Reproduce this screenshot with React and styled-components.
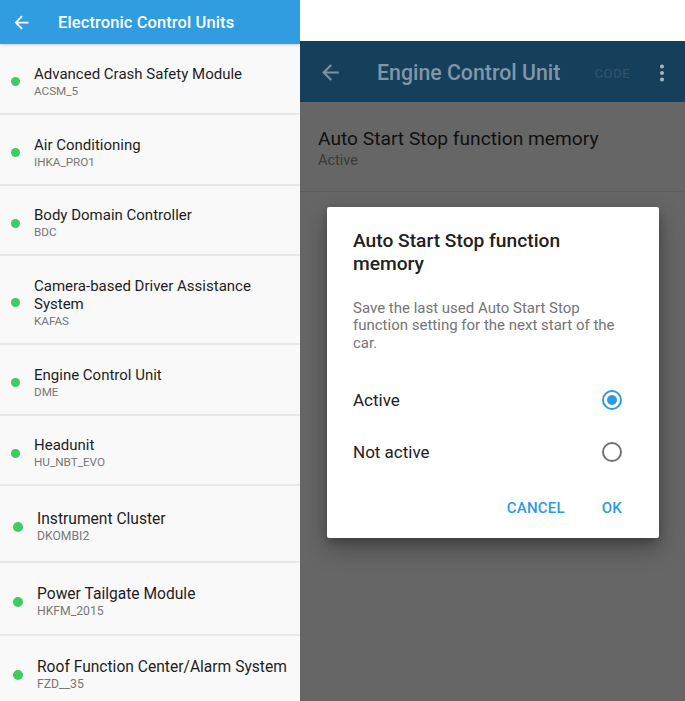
import React from 'react'
import styled, { createGlobalStyle } from 'styled-components'

const GlobalStyle = createGlobalStyle`
    html, body {
        margin: 0;
        padding: 0;
        background: #fff;
    }
    body {
        font-family: Roboto, "Noto Sans", "Liberation Sans", sans-serif;
        -webkit-font-smoothing: antialiased;
    }
`

const units = [
    { name: 'Advanced Crash Safety Module', code: 'ACSM_5', h: 71 },
    { name: 'Air Conditioning', code: 'IHKA_PRO1', h: 71 },
    { name: 'Body Domain Controller', code: 'BDC', h: 70 },
    { name: 'Camera-based Driver Assistance System', code: 'KAFAS', h: 89 },
    { name: 'Engine Control Unit', code: 'DME', h: 71 },
    { name: 'Headunit', code: 'HU_NBT_EVO', h: 70 },
    { name: 'Instrument Cluster', code: 'DKOMBI2', h: 77, big: true },
    { name: 'Power Tailgate Module', code: 'HKFM_2015', h: 73, big: true },
    { name: 'Roof Function Center/Alarm System', code: 'FZD__35', h: 74, big: true },
]

const BackArrow = ({ size = 24, color = '#fff' }) => (
    <svg width={size} height={size} viewBox="0 0 24 24">
        <path fill={color} d="M20 11H7.83l5.59-5.59L12 4l-8 8 8 8 1.41-1.41L7.83 13H20v-2z" />
    </svg>
)

const Kebab = ({ color }) => (
    <svg width="6" height="18" viewBox="0 0 6 18">
        <circle cx="3" cy="2.5" r="2" fill={color} />
        <circle cx="3" cy="9" r="2" fill={color} />
        <circle cx="3" cy="15.5" r="2" fill={color} />
    </svg>
)

const App = () => {
    return (
        <>
            <GlobalStyle />
            <Page>
                <ListScreen>
                    <Header>
                        <IconSlot>
                            <BackArrow size={21} />
                        </IconSlot>
                        <HeaderTitle>Electronic Control Units</HeaderTitle>
                    </Header>
                    <List>
                        {units.map((u) => (
                            <Row key={u.code} $h={u.h} $big={u.big}>
                                <Dot $big={u.big} />
                                <RowText>
                                    <RowTitle $big={u.big}>{u.name}</RowTitle>
                                    <RowCode $big={u.big}>{u.code}</RowCode>
                                </RowText>
                            </Row>
                        ))}
                    </List>
                </ListScreen>

                <RightPane>
                    <TopGap />
                    <DetailScreen>
                        <Toolbar>
                            <ToolbarBack>
                                <BackArrow size={25} color="#7c93a4" />
                            </ToolbarBack>
                            <ToolbarTitle>Engine Control Unit</ToolbarTitle>
                            <ToolbarAction>CODE</ToolbarAction>
                            <KebabSlot>
                                <Kebab color="#a9b6c0" />
                            </KebabSlot>
                        </Toolbar>
                        <SettingRow>
                            <SettingTitle>Auto Start Stop function memory</SettingTitle>
                            <SettingValue>Active</SettingValue>
                        </SettingRow>

                        <Scrim>
                            <Dialog>
                                <DialogTitle>Auto Start Stop function memory</DialogTitle>
                                <DialogBody>
                                    Save the last used Auto Start Stop function setting for the next start of the car.
                                </DialogBody>
                                <Options>
                                    <Option>
                                        <OptionLabel>Active</OptionLabel>
                                        <Radio $checked />
                                    </Option>
                                    <Option>
                                        <OptionLabel>Not active</OptionLabel>
                                        <Radio />
                                    </Option>
                                </Options>
                                <Actions>
                                    <TextButton>CANCEL</TextButton>
                                    <TextButton>OK</TextButton>
                                </Actions>
                            </Dialog>
                        </Scrim>
                    </DetailScreen>
                </RightPane>
            </Page>
        </>
    )
}

export default App

const Page = styled.div`
    display: flex;
    width: 685px;
    height: 701px;
    overflow: hidden;
    background: #fff;
`

const ListScreen = styled.div`
    width: 300px;
    flex-shrink: 0;
    display: flex;
    flex-direction: column;
    background: #f9f9f9;
    overflow: hidden;
`

const Header = styled.div`
    height: 44px;
    flex-shrink: 0;
    display: flex;
    align-items: center;
    background: #2f9de0;
    box-shadow: 0 1px 3px rgba(0, 0, 0, 0.18);
    position: relative;
    z-index: 1;
`

const IconSlot = styled.div`
    width: 21px;
    height: 21px;
    margin-left: 11px;
    display: flex;
`

const HeaderTitle = styled.div`
    margin-left: 26px;
    color: #fff;
    font-size: 16.5px;
    font-weight: 500;
    letter-spacing: 0.1px;
`

const List = styled.div`
    display: flex;
    flex-direction: column;
`

const Row = styled.div`
    height: ${(p) => p.$h}px;
    flex-shrink: 0;
    box-sizing: border-box;
    display: flex;
    align-items: center;
    padding: 6px 4px 0 ${(p) => (p.$big ? 13 : 11)}px;
    gap: ${(p) => (p.$big ? 14 : 14)}px;
    border-bottom: 2px solid #e8e8e8;
`

const Dot = styled.span`
    width: ${(p) => (p.$big ? 10 : 9)}px;
    height: ${(p) => (p.$big ? 10 : 9)}px;
    border-radius: 50%;
    background: #3ecb63;
    flex-shrink: 0;
`

const RowText = styled.div`
    display: flex;
    flex-direction: column;
`

const RowTitle = styled.div`
    font-size: ${(p) => (p.$big ? 15.6 : 15)}px;
    line-height: 18px;
    color: #1e1e1e;
`

const RowCode = styled.div`
    font-size: ${(p) => (p.$big ? 12.2 : 11.7)}px;
    line-height: 15px;
    margin-top: 1px;
    color: #777;
`

const RightPane = styled.div`
    flex: 1;
    display: flex;
    flex-direction: column;
`

const TopGap = styled.div`
    height: 41px;
    flex-shrink: 0;
    background: #fff;
`

const DetailScreen = styled.div`
    flex: 1;
    position: relative;
    background: #666;
    display: flex;
    flex-direction: column;
`

const Toolbar = styled.div`
    height: 61px;
    flex-shrink: 0;
    display: flex;
    align-items: center;
    background: #153f5a;
    padding-top: 2px;
    box-sizing: border-box;
`

const ToolbarBack = styled.div`
    display: flex;
    margin-left: 18px;
`

const ToolbarTitle = styled.div`
    margin-left: 34px;
    font-size: 21.3px;
    font-weight: 500;
    color: #7f97a8;
    flex: 1;
`

const ToolbarAction = styled.div`
    font-size: 13.5px;
    font-weight: 500;
    color: #2f5068;
    letter-spacing: 0.3px;
`

const KebabSlot = styled.div`
    display: flex;
    margin: 0 20px 0 29px;
`

const SettingRow = styled.div`
    height: 90px;
    box-sizing: border-box;
    display: flex;
    flex-direction: column;
    justify-content: center;
    padding: 5px 18px 0;
    border-bottom: 1px solid #5c5c5c;
`

const SettingTitle = styled.div`
    font-size: 19.2px;
    line-height: 22px;
    color: #101010;
`

const SettingValue = styled.div`
    font-size: 14.5px;
    line-height: 18px;
    margin-top: 2px;
    color: #3a3a3a;
`

const Scrim = styled.div`
    position: absolute;
    inset: 0;
    display: flex;
    align-items: center;
    justify-content: center;
    padding: 3px 0 0 1px;
`

const Dialog = styled.div`
    width: 332px;
    box-sizing: border-box;
    background: #fff;
    border-radius: 2px;
    padding: 22px 37px 0 26px;
    box-shadow: 0 10px 24px rgba(0, 0, 0, 0.3), 0 4px 8px rgba(0, 0, 0, 0.2);
`

const DialogTitle = styled.div`
    font-size: 19.2px;
    line-height: 23px;
    font-weight: 500;
    color: #212121;
`

const DialogBody = styled.div`
    margin-top: 25px;
    font-size: 15px;
    line-height: 17.5px;
    color: #757575;
`

const Options = styled.div`
    margin-top: 22px;
    display: flex;
    flex-direction: column;
`

const Option = styled.div`
    height: 52px;
    display: flex;
    align-items: center;
    justify-content: space-between;
`

const OptionLabel = styled.div`
    font-size: 17px;
    color: #212121;
`

const Radio = styled.span`
    width: 20px;
    height: 20px;
    box-sizing: border-box;
    border-radius: 50%;
    border: 2px solid ${(p) => (p.$checked ? '#2e9be0' : '#737373')};
    display: flex;
    align-items: center;
    justify-content: center;

    &::after {
        content: '';
        width: 10px;
        height: 10px;
        border-radius: 50%;
        background: #2e9be0;
        display: ${(p) => (p.$checked ? 'block' : 'none')};
    }
`

const Actions = styled.div`
    display: flex;
    justify-content: flex-end;
    gap: 37px;
    padding: 12px 0 12px;
`

const TextButton = styled.div`
    height: 36px;
    display: flex;
    align-items: center;
    font-size: 15px;
    font-weight: 500;
    color: #2e9be0;
    letter-spacing: 0.2px;
`
